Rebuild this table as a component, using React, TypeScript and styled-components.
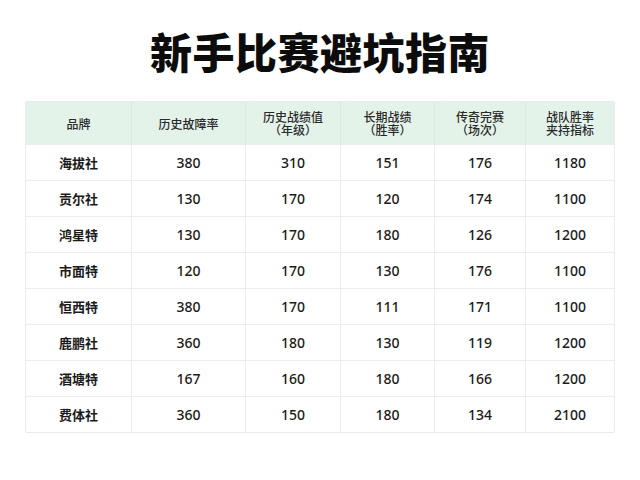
import React from 'react';
import styled, { createGlobalStyle } from 'styled-components';

const GlobalStyle = createGlobalStyle`
  html, body {
    margin: 0;
    padding: 0;
    background: #ffffff;
  }
  body {
    font-family: "Noto Sans CJK SC", "Noto Sans", sans-serif;
    color: #1e1e1e;
  }
`;

const Page = styled.div`
  width: 640px;
  height: 480px;
  display: flex;
  flex-direction: column;
  align-items: center;
  box-sizing: border-box;
  padding-top: 23px;
`;

const Title = styled.h1`
  margin: 0;
  height: 56px;
  font-size: 42px;
  line-height: 56px;
  font-weight: 900;
  letter-spacing: 0.5px;
  color: #0c0c0c;
`;

const Table = styled.div`
  margin-top: 22px;
  width: 588px;
  display: grid;
  grid-template-columns: 106px 114px 95px 94px 91px 88px;
  border: 1px solid #e9ecea;
  border-radius: 2px;
`;

const HeadCell = styled.div<{ $last?: boolean }>`
  height: 42px;
  display: flex;
  align-items: center;
  justify-content: center;
  text-align: center;
  background: #e4f3ea;
  border-right: ${(p) => (p.$last ? 'none' : '1px solid #d8ebe0')};
  font-size: 12px;
  line-height: 13px;
  font-weight: 500;
  color: #2a2a2a;
  white-space: pre-line;
`;

const Cell = styled.div<{ $name?: boolean; $last?: boolean }>`
  height: 36px;
  display: flex;
  align-items: center;
  justify-content: center;
  border-top: 1px solid #eceeed;
  border-right: ${(p) => (p.$last ? 'none' : '1px solid #eceeed')};
  box-sizing: border-box;
  font-family: ${(p) =>
    p.$name ? '"Noto Sans CJK SC", sans-serif' : '"Noto Sans", "Liberation Sans", sans-serif'};
  font-size: ${(p) => (p.$name ? '13px' : '14px')};
  font-weight: ${(p) => (p.$name ? 700 : 500)};
  color: #1a1a1a;
`;

const headers = [
  '品牌',
  '历史故障率',
  '历史战绩值\n（年级）',
  '长期战绩\n（胜率）',
  '传奇完赛\n（场次）',
  '战队胜率\n夹持指标',
];

const rows: string[][] = [
  ['海拔社', '380', '310', '151', '176', '1180'],
  ['贡尔社', '130', '170', '120', '174', '1100'],
  ['鸿星特', '130', '170', '180', '126', '1200'],
  ['市面特', '120', '170', '130', '176', '1100'],
  ['恒西特', '380', '170', '111', '171', '1100'],
  ['鹿鹏社', '360', '180', '130', '119', '1200'],
  ['酒塘特', '167', '160', '180', '166', '1200'],
  ['费体社', '360', '150', '180', '134', '2100'],
];

export default function App() {
  return (
    <>
      <GlobalStyle />
      <Page>
        <Title>新手比赛避坑指南</Title>
        <Table>
          {headers.map((h, i) => (
            <HeadCell key={h} $last={i === headers.length - 1}>
              {h}
            </HeadCell>
          ))}
          {rows.map((row) =>
            row.map((v, i) => (
              <Cell key={row[0] + i} $name={i === 0} $last={i === row.length - 1}>
                {v}
              </Cell>
            ))
          )}
        </Table>
      </Page>
    </>
  );
}
